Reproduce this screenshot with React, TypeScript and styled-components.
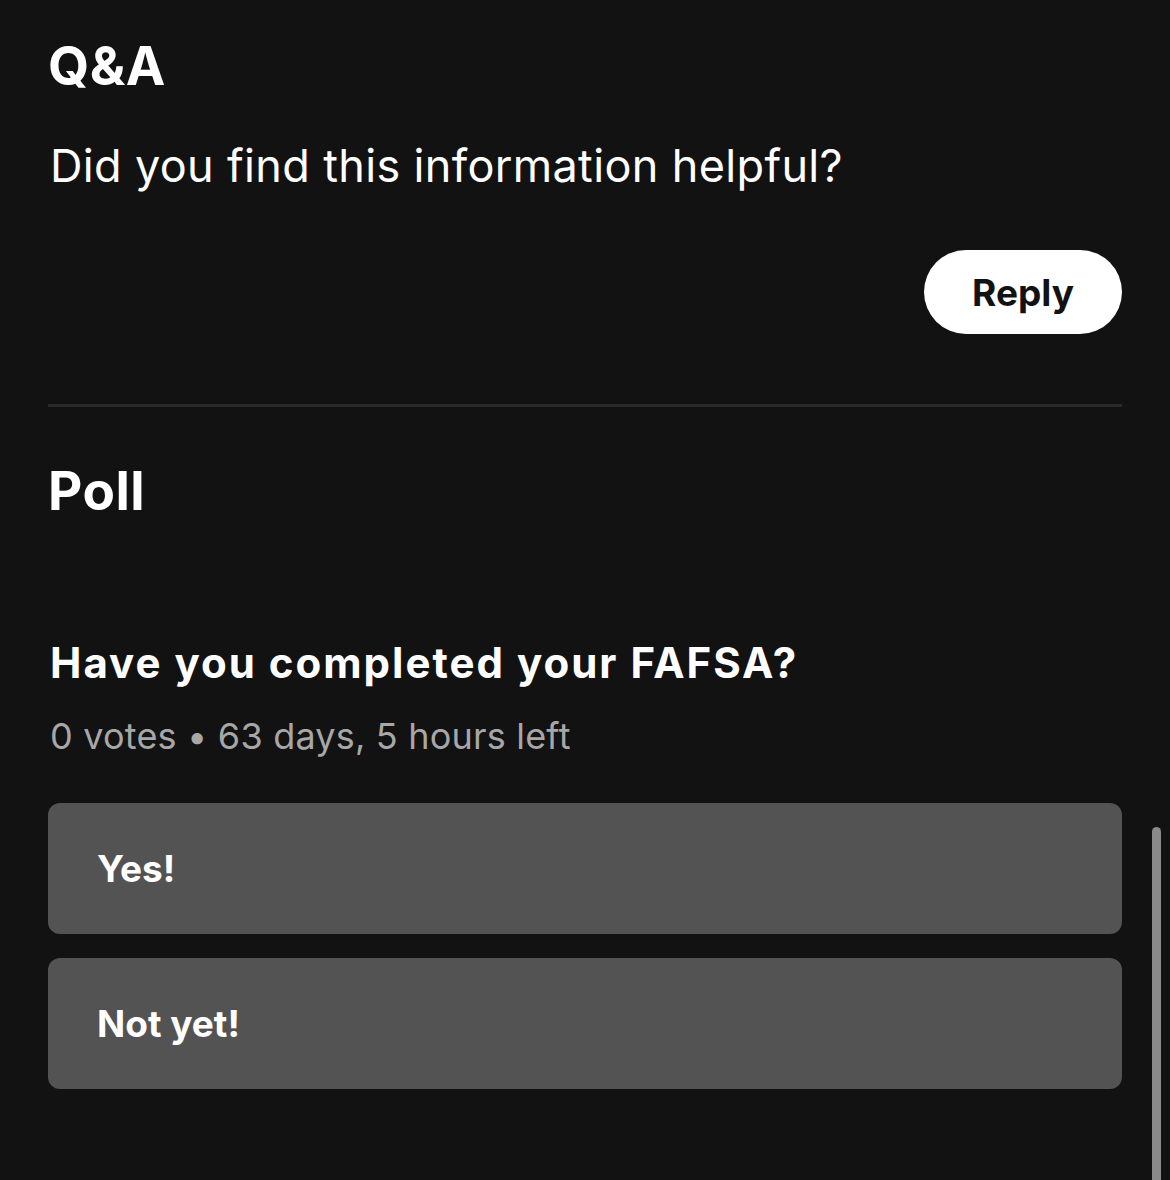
import * as React from 'react';
import styled, { createGlobalStyle } from 'styled-components';

const GlobalStyle = createGlobalStyle`
  html, body {
    margin: 0;
    padding: 0;
    background: #121212;
  }
  body {
    font-family: Inter, "Noto Sans", sans-serif;
    color: #ffffff;
    -webkit-font-smoothing: antialiased;
  }
`;

const Page = styled.div`
  box-sizing: border-box;
  min-height: 1180px;
  padding: 30px 48px 0 48px;
  position: relative;
  overflow: hidden;
`;

const Section = styled.section`
  display: flex;
  flex-direction: column;
`;

const SectionTitle = styled.h2`
  margin: 0;
  font-size: 53px;
  line-height: 72px;
  font-weight: 700;
  letter-spacing: 0.5px;
`;

const BodyText = styled.p`
  margin: 34px 0 0 2px;
  font-size: 45px;
  line-height: 60px;
  font-weight: 400;
  letter-spacing: 0.35px;
`;

const Actions = styled.div`
  display: flex;
  justify-content: flex-end;
  margin-top: 54px;
`;

const ReplyButton = styled.button`
  height: 84px;
  padding: 0 48px;
  border: none;
  border-radius: 42px;
  background: #ffffff;
  color: #121212;
  font-family: inherit;
  font-size: 37px;
  font-weight: 700;
  cursor: pointer;
`;

const Divider = styled.hr`
  margin: 70px 0 0 0;
  border: none;
  height: 3px;
  background: #2a2a2a;
`;

const PollTitle = styled(SectionTitle)`
  margin-top: 48px;
`;

const Question = styled.h3`
  margin: 108px 0 0 2px;
  font-size: 42px;
  line-height: 56px;
  font-weight: 700;
  letter-spacing: 2px;
`;

const Meta = styled.div`
  margin: 21px 0 0 2px;
  font-size: 36px;
  line-height: 48px;
  color: #a7a7a7;
  letter-spacing: 0.2px;
`;

const Options = styled.div`
  display: flex;
  flex-direction: column;
  gap: 24px;
  margin-top: 43px;
`;

const Option = styled.button`
  display: flex;
  align-items: center;
  height: 131px;
  padding: 0 49px;
  border: none;
  border-radius: 12px;
  background: #535353;
  color: #ffffff;
  font-family: inherit;
  font-size: 37px;
  font-weight: 700;
  text-align: left;
  cursor: pointer;
`;

const ScrollThumb = styled.div`
  position: absolute;
  right: 9px;
  top: 827px;
  width: 9px;
  height: 380px;
  border-radius: 5px;
  background: #8a8a8a;
`;

const options = ['Yes!', 'Not yet!'];

export default function App() {
  return (
    <>
      <GlobalStyle />
      <Page>
        <Section>
          <SectionTitle>Q&amp;A</SectionTitle>
          <BodyText>Did you find this information helpful?</BodyText>
          <Actions>
            <ReplyButton>Reply</ReplyButton>
          </Actions>
        </Section>
        <Divider />
        <Section>
          <PollTitle>Poll</PollTitle>
          <Question>Have you completed your FAFSA?</Question>
          <Meta>0 votes • 63 days, 5 hours left</Meta>
          <Options>
            {options.map(o => (
              <Option key={o}>{o}</Option>
            ))}
          </Options>
        </Section>
        <ScrollThumb />
      </Page>
    </>
  );
}
